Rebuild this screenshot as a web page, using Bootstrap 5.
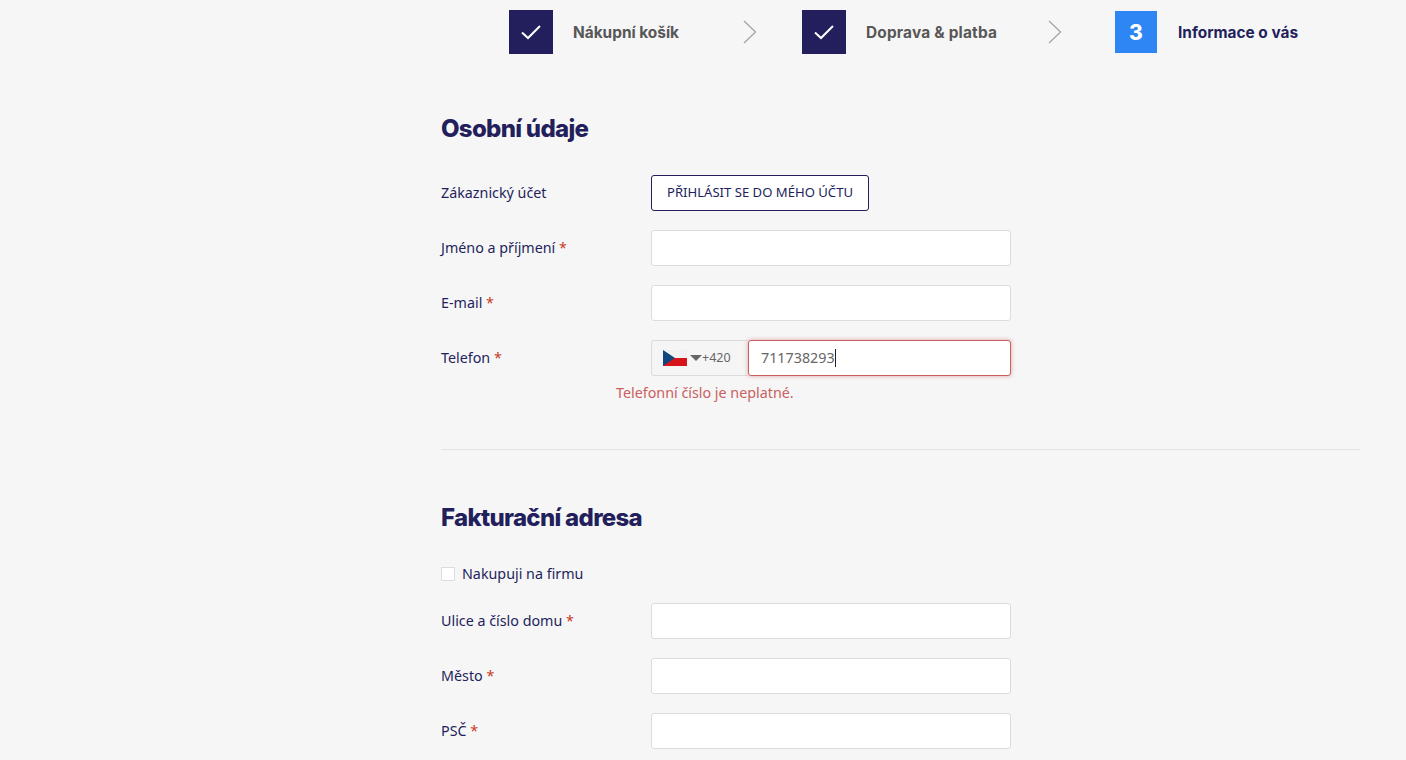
<!DOCTYPE html>
<html lang="cs">
<head>
    <meta charset="UTF-8">
    <meta name="viewport" content="width=device-width, initial-scale=1.0">
    <title>Informace o vás</title>
    <link rel="stylesheet" href="https://cdn.jsdelivr.net/npm/bootstrap@5.3.0/dist/css/bootstrap.min.css">
    <script src="https://cdn.jsdelivr.net/npm/bootstrap@5.3.0/dist/js/bootstrap.bundle.min.js"></script>
    <style>
        html, body {
            height: 760px;
            overflow: hidden;
        }
        body {
            background-color: #f6f6f6;
            color: #231f5c;
            font-family: "Noto Sans", sans-serif;
            font-size: 14.3px;
        }
        .steps {
            padding: 10px 0 0 509px;
            height: 54px;
        }
        .step-box {
            width: 44px;
            height: 44px;
            background: #231f5c;
            color: #fff;
        }
        .step-box.now {
            width: 42px;
            height: 42px;
            margin-top: 1px;
            background: #2e86f5;
            font-family: Inter, sans-serif;
            font-weight: 800;
            font-size: 21px;
            padding-top: 2px;
        }
        .step-name {
            font-family: Inter, sans-serif;
            font-weight: 700;
            font-size: 15.4px;
            color: #575757;
            margin-left: 20px;
            padding-top: 1px;
            white-space: nowrap;
        }
        .name-cart {
            width: 106px;
        }
        .name-ship {
            width: 132px;
            letter-spacing: .2px;
        }
        .step-name.now {
            color: #231f5c;
            margin-left: 21px;
        }
        .step-arrow-1 {
            margin: 0 45px 0 64px;
        }
        .step-arrow-2 {
            margin: 0 53px 0 50px;
        }
        .form-wrap {
            margin-left: 441px;
            width: 919px;
        }
        .sec-title {
            font-family: Inter, sans-serif;
            font-weight: 800;
            font-size: 24px;
            letter-spacing: -0.7px;
            color: #231f5c;
            line-height: 32px;
            margin: 0;
        }
        .first-title {
            margin-top: 59px;
            margin-bottom: 30px;
        }
        .second-title {
            margin-top: 52px;
            margin-bottom: 28px;
        }
        .field-row {
            height: 36px;
            margin-bottom: 19px;
        }
        .field-label {
            width: 210px;
            flex-shrink: 0;
        }
        .req {
            color: #c8381e;
        }
        .field-input {
            width: 360px;
            height: 36px;
            border: 1px solid #dcdcdc;
            border-radius: 3px;
            background: #fff;
            box-shadow: none;
            font-size: 14.5px;
        }
        .login-btn {
            width: 218px;
            height: 36px;
            padding: 0;
            background: #fff;
            border: 1px solid #231f5c;
            border-radius: 3px;
            color: #231f5c;
            font-size: 13.1px;
        }
        .phone-group {
            width: 360px;
            height: 36px;
        }
        .phone-prefix {
            width: 97px;
            border: 1px solid #dcdcdc;
            border-right: 0;
            border-radius: 3px 0 0 3px;
            background: #f5f5f5;
            color: #666;
            font-size: 12.5px;
            padding-left: 11px;
        }
        .caret-down {
            width: 0;
            height: 0;
            border-left: 6px solid transparent;
            border-right: 6px solid transparent;
            border-top: 6px solid #666;
            margin: 0 0 0 3px;
        }
        .phone-input {
            flex: 1;
            height: 36px;
            border: 1px solid #c9605f;
            border-radius: 3px;
            background: #fff;
            box-shadow: 0 0 4px rgba(201, 80, 79, .5);
            padding-left: 12px;
            color: #666;
            font-size: 14.3px;
            line-height: 34px;
        }
        .caret-bar {
            display: inline-block;
            width: 1px;
            height: 18px;
            background: #222;
            vertical-align: -4px;
        }
        .phone-error {
            color: #c9605f;
            margin: 7px 0 0 175px;
            line-height: 20px;
        }
        .sec-line {
            border-top: 1px solid #e4e4e4;
            margin-top: 46px;
        }
        .firm-check {
            margin-bottom: 17px;
            height: 24px;
        }
        .check-box {
            width: 14px;
            height: 14px;
            background: #fff;
            border: 1px solid #dcdcdc;
            margin-right: 7px;
        }
    </style>
</head>
<body>

<!-- Kroky objednávky -->
<div class="steps d-flex">
    <div class="step-box d-flex align-items-center justify-content-center">
        <svg width="22" height="16" viewBox="0 0 22 16"><path d="M2 8.5 L8 14 L20 2" fill="none" stroke="#fff" stroke-width="2"/></svg>
    </div>
    <div class="step-name name-cart d-flex align-items-center">Nákupní košík</div>
    <div class="step-arrow-1 d-flex align-items-center">
        <svg width="14" height="24" viewBox="0 0 14 24"><path d="M1 1 L12.5 12 L1 23" fill="none" stroke="#a5a5a5" stroke-width="1.3"/></svg>
    </div>
    <div class="step-box d-flex align-items-center justify-content-center">
        <svg width="22" height="16" viewBox="0 0 22 16"><path d="M2 8.5 L8 14 L20 2" fill="none" stroke="#fff" stroke-width="2"/></svg>
    </div>
    <div class="step-name name-ship d-flex align-items-center">Doprava &amp; platba</div>
    <div class="step-arrow-2 d-flex align-items-center">
        <svg width="14" height="24" viewBox="0 0 14 24"><path d="M1 1 L12.5 12 L1 23" fill="none" stroke="#a5a5a5" stroke-width="1.3"/></svg>
    </div>
    <div class="step-box now d-flex align-items-center justify-content-center">3</div>
    <div class="step-name now d-flex align-items-center">Informace o vás</div>
</div>

<div class="form-wrap">
    <h2 class="sec-title first-title">Osobní údaje</h2>

    <div class="field-row d-flex align-items-center">
        <label class="field-label">Zákaznický účet</label>
        <button type="button" class="btn login-btn">PŘIHLÁSIT SE DO MÉHO ÚČTU</button>
    </div>
    <div class="field-row d-flex align-items-center">
        <label class="field-label">Jméno a příjmení <span class="req">*</span></label>
        <input class="form-control field-input" type="text">
    </div>
    <div class="field-row d-flex align-items-center">
        <label class="field-label">E-mail <span class="req">*</span></label>
        <input class="form-control field-input" type="text">
    </div>
    <div class="d-flex align-items-center">
        <label class="field-label">Telefon <span class="req">*</span></label>
        <div class="phone-group d-flex">
            <div class="phone-prefix d-flex align-items-center">
                <svg width="24" height="16" viewBox="0 0 24 16">
                    <rect width="24" height="8" fill="#f1f1f1"/>
                    <rect y="8" width="24" height="8" fill="#d7141a"/>
                    <path d="M0 0 L12 8 L0 16 Z" fill="#11457e"/>
                </svg>
                <span class="caret-down"></span>
                <span>+420</span>
            </div>
            <div class="phone-input">711738293<span class="caret-bar"></span></div>
        </div>
    </div>
    <div class="phone-error">Telefonní číslo je neplatné.</div>

    <div class="sec-line"></div>

    <h2 class="sec-title second-title">Fakturační adresa</h2>

    <div class="firm-check d-flex align-items-center">
        <span class="check-box"></span>
        <span>Nakupuji na firmu</span>
    </div>
    <div class="field-row d-flex align-items-center">
        <label class="field-label">Ulice a číslo domu <span class="req">*</span></label>
        <input class="form-control field-input" type="text">
    </div>
    <div class="field-row d-flex align-items-center">
        <label class="field-label">Město <span class="req">*</span></label>
        <input class="form-control field-input" type="text">
    </div>
    <div class="field-row d-flex align-items-center">
        <label class="field-label">PSČ <span class="req">*</span></label>
        <input class="form-control field-input" type="text">
    </div>
</div>

</body>
</html>
